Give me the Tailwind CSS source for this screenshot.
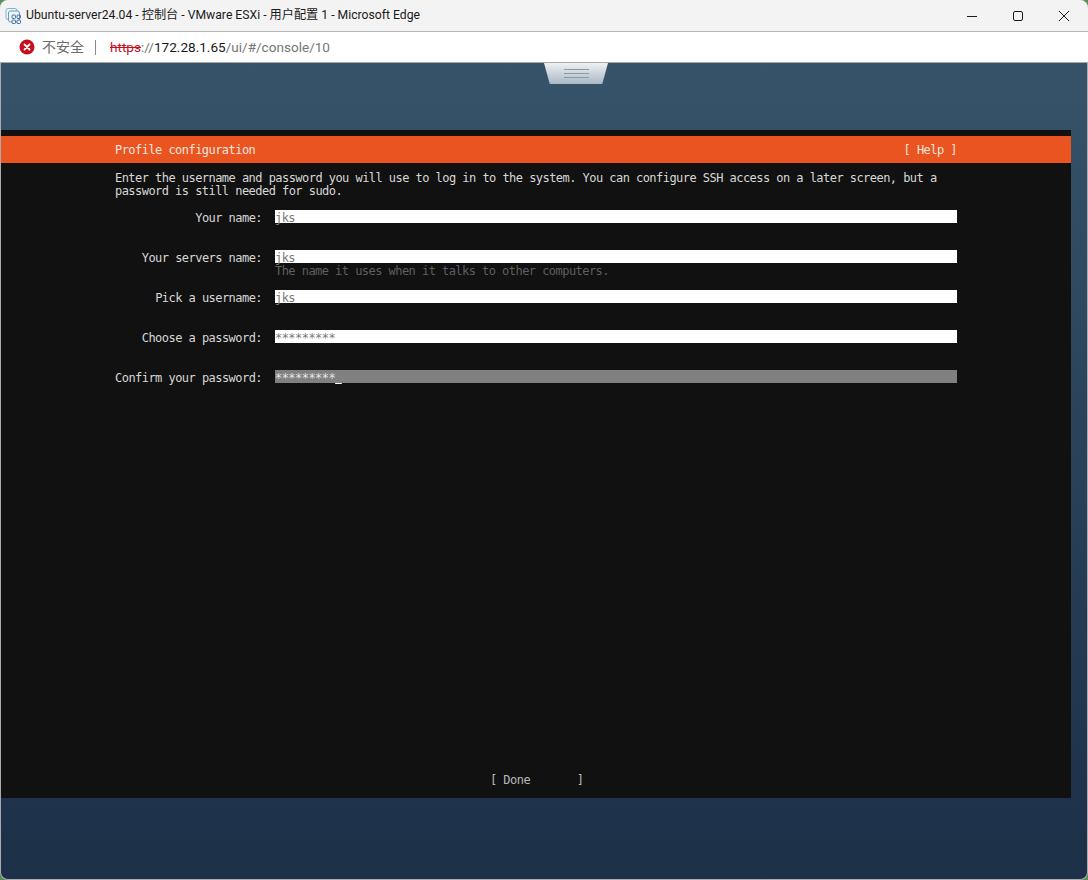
<!DOCTYPE html>
<html lang="zh-CN">
<head>
    <meta charset="UTF-8">
    <title>Ubuntu-server24.04 - 控制台 - VMware ESXi - 用户配置 1 - Microsoft Edge</title>
    <script src="https://cdn.jsdelivr.net/npm/@tailwindcss/browser@4"></script>
</head>
<body class="w-[1088px] h-[880px] overflow-hidden bg-[#5a8f5a]">
    <div class="w-[1088px] h-[880px] flex flex-col bg-[#ababab] rounded-t-[8px] rounded-b-[8px] overflow-hidden font-['Roboto','Noto_Sans_CJK_SC',sans-serif]">
        <!-- title bar -->
        <div class="h-[31px] shrink-0 flex items-center bg-[#f3f3f3] pl-[5px] pr-px text-[12.2px] text-[#1a1a1a]">
            <svg class="w-[18px] h-[18px] shrink-0" viewBox="0 0 18 18" fill="none">
                <rect x="1" y="1.5" width="11" height="11" rx="2" stroke="#7fb2dc"/>
                <rect x="3.5" y="4" width="11" height="11" rx="2" fill="#f3f3f3" stroke="#5d9bd0"/>
                <rect x="7" y="8" width="3.5" height="3.5" rx="1" stroke="#3d6fa8"/>
                <rect x="12" y="8" width="3.5" height="3.5" rx="1" stroke="#3d6fa8"/>
                <rect x="7" y="13" width="3.5" height="3.5" rx="1" fill="#f3f3f3" stroke="#3d6fa8"/>
                <rect x="12" y="13" width="3.5" height="3.5" rx="1" fill="#f3f3f3" stroke="#3d6fa8"/>
            </svg>
            <span class="ml-[3px] whitespace-nowrap">Ubuntu-server24.04 - 控制台 - VMware ESXi - 用户配置 1 - Microsoft Edge</span>
            <div class="ml-auto flex items-center">
                <div class="w-[46px] h-[31px] flex items-center justify-center">
                    <svg class="w-[12px] h-[12px]" viewBox="0 0 12 12"><path d="M1 6.5H11" stroke="#1a1a1a" stroke-width="1"/></svg>
                </div>
                <div class="w-[46px] h-[31px] flex items-center justify-center">
                    <svg class="w-[12px] h-[12px]" viewBox="0 0 12 12" fill="none"><rect x="1.5" y="1.5" width="9" height="9" rx="1.5" stroke="#1a1a1a"/></svg>
                </div>
                <div class="w-[46px] h-[31px] flex items-center justify-center">
                    <svg class="w-[12px] h-[12px]" viewBox="0 0 12 12" fill="none"><path d="M1 1L11 11M11 1L1 11" stroke="#1a1a1a"/></svg>
                </div>
            </div>
        </div>
        <!-- address bar -->
        <div class="h-[31px] shrink-0 flex items-center bg-white border-t border-[#b5b5b5] pl-[19px] text-[14px] text-[#5f6368]">
            <svg class="w-[16px] h-[16px] shrink-0" viewBox="0 0 16 16">
                <circle cx="8" cy="8" r="7.5" fill="#c50f1f"/>
                <path d="M5.5 5.5L10.5 10.5M10.5 5.5L5.5 10.5" stroke="#fff" stroke-width="1.8" stroke-linecap="round"/>
            </svg>
            <span class="ml-[7px] text-[#6b6b6b]">不安全</span>
            <div class="ml-[11px] w-px h-[15px] bg-[#8a8a8a]"></div>
            <span class="ml-[14px] whitespace-nowrap text-[13.57px]"><span class="text-[#c50f1f] line-through">https</span><span class="text-[#767676]">://</span><span class="text-[#1a1a1a]">172.28.1.65</span><span class="text-[#767676]">/ui/#/console/10</span></span>
        </div>
        <!-- console area -->
        <div class="relative flex-1 ml-px mr-px mb-px border-t border-[#a9a9a9] rounded-b-[7px] overflow-hidden bg-gradient-to-b from-[#36536a] to-[#1c3048] pt-[67px] pb-[81px]">
            <!-- toolbar handle -->
            <div class="absolute top-0 left-[543px] w-[64px] h-[21px] bg-gradient-to-b from-[#eef1f3] to-[#a9b8c4] [clip-path:polygon(0_0,100%_0,91%_100%,9%_100%)] flex flex-col items-center justify-center gap-[3px]">
                <div class="w-[25px] h-px bg-[#8c9aa6]"></div>
                <div class="w-[25px] h-px bg-[#8c9aa6]"></div>
                <div class="w-[25px] h-px bg-[#8c9aa6]"></div>
            </div>
            <!-- terminal -->
            <div class="w-[1070px] h-full flex flex-col bg-[#111111] pt-[6px] font-['DejaVu_Sans_Mono',monospace] text-[12px] tracking-[-0.545px] leading-[13.37px] text-[#d8d8d8]">
                <div class="h-[27px] shrink-0 flex items-center justify-between bg-[#e95420] pl-[114px] pr-[114px] pt-[3px] text-[#f5e6df]">
                    <span>Profile configuration</span>
                    <span>[ Help ]</span>
                </div>
                <p class="mt-[9px] ml-[114px] whitespace-pre">Enter the username and password you will use to log in to the system. You can configure SSH access on a later screen, but a
password is still needed for sudo.</p>
                <div class="mt-[11px] ml-[114px] w-[842px] flex flex-col leading-[17px]">
                    <div class="h-[40px] flex items-start">
                        <span class="w-[147px] h-[13px] text-right shrink-0">Your name:</span>
                        <span class="ml-[13px] flex-1 h-[13px] bg-white text-[#7a7a7a]">jks</span>
                    </div>
                    <div class="h-[40px] flex items-start">
                        <span class="w-[147px] h-[13px] text-right shrink-0">Your servers name:</span>
                        <div class="ml-[13px] flex-1">
                            <div class="h-[13px] bg-white text-[#7a7a7a]">jks</div>
                            <div class="text-[#5f5f5f]">The name it uses when it talks to other computers.</div>
                        </div>
                    </div>
                    <div class="h-[40px] flex items-start">
                        <span class="w-[147px] h-[13px] text-right shrink-0">Pick a username:</span>
                        <span class="ml-[13px] flex-1 h-[13px] bg-white text-[#7a7a7a]">jks</span>
                    </div>
                    <div class="h-[40px] flex items-start">
                        <span class="w-[147px] h-[13px] text-right shrink-0">Choose a password:</span>
                        <span class="ml-[13px] flex-1 h-[13px] bg-white text-[#7a7a7a]">*********</span>
                    </div>
                    <div class="h-[40px] flex items-start">
                        <span class="w-[147px] h-[13px] text-right shrink-0">Confirm your password:</span>
                        <span class="ml-[13px] flex-1 h-[13px] bg-[#808080] text-[#e4e4e4]">*********<span class="underline text-white">&nbsp;</span></span>
                    </div>
                </div>
                <div class="mt-auto mb-[11px] ml-[489px] text-[#b8b8b8] whitespace-pre">[ Done       ]</div>
            </div>
        </div>
    </div>
</body>
</html>
